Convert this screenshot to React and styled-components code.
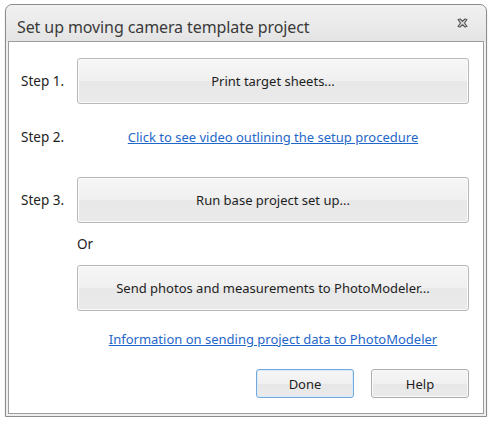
import styled, { createGlobalStyle } from "styled-components";

const Global = createGlobalStyle`
  html, body {
    margin: 0;
    background: #fff;
  }
  body {
    font-family: "Noto Sans", "Open Sans", sans-serif;
    color: #1e1e1e;
  }
`;

const Window = styled.div`
  margin: 4px 0 0 5px;
  width: 482px;
  height: 413px;
  box-sizing: border-box;
  border: 1px solid #8c8c8c;
  border-radius: 7px 7px 0 0;
  background: linear-gradient(180deg, #f1f1f1 0, #e4e4e4 36px, #eeeeee 37px);
  padding: 0 2px 2px 2px;
  display: flex;
  flex-direction: column;
  box-shadow: 0 1px 2px rgba(0, 0, 0, 0.15);
`;

const TitleBar = styled.div`
  height: 36px;
  display: flex;
  align-items: center;
  justify-content: space-between;
  padding: 0 16px 0 9px;
`;

const Title = styled.span`
  font-size: 16px;
  color: #3a3a3a;
  letter-spacing: -0.1px;
  padding-top: 7px;
`;

const Client = styled.div`
  flex: 1;
  background: #fff;
  border: 1px solid #9d9d9d;
  padding: 16px 14px 0 12px;
  display: flex;
  flex-direction: column;
`;

const Row = styled.div`
  display: grid;
  grid-template-columns: 56px 1fr;
  align-items: center;
  margin-top: ${(p) => p.$top || 0}px;
`;

const Label = styled.span`
  font-size: 13.5px;
  color: #1e1e1e;
`;

const BigButton = styled.button`
  height: 46px;
  width: 100%;
  border: 1px solid #b8b8b8;
  border-radius: 3px;
  background: linear-gradient(180deg, #f6f6f6 0%, #f0f0f0 50%, #e8e8e8 51%, #eaeaea 100%);
  box-shadow: inset 0 0 0 1px #fbfbfb;
  font-family: inherit;
  font-size: 13px;
  color: #1e1e1e;
  padding: 0;
`;

const LinkText = styled.a`
  font-size: 13px;
  color: #1f67c9;
  text-decoration: underline;
  text-align: center;
  line-height: 20px;
  cursor: pointer;
`;

const Or = styled.span`
  font-size: 13.5px;
  line-height: 20px;
`;

const Footer = styled.div`
  display: flex;
  justify-content: flex-end;
  gap: 17px;
  margin-top: 20px;
`;

const DialogButton = styled.button`
  width: 98px;
  height: 29px;
  border: 1px solid ${(p) => (p.$default ? "#73a8dc" : "#adadad")};
  border-radius: 3px;
  background: linear-gradient(180deg, #f6f6f6 0%, #f0f0f0 50%, #e7e7e7 51%, #eaeaea 100%);
  box-shadow: inset 0 0 0 1px ${(p) => (p.$default ? "#d7ecfa" : "#fafafa")};
  font-family: inherit;
  font-size: 13px;
  color: #1e1e1e;
  padding: 0;
`;

const CloseIcon = () => (
  <svg width="11" height="10" viewBox="0 0 11 10">
    <path
      d="M1 1.5 L3 1 L5.5 3.3 L8 1 L10 1.5 L7.5 5 L10 8.5 L8 9 L5.5 6.7 L3 9 L1 8.5 L3.5 5 Z"
      fill="#d6d6d6"
      stroke="#5a5a5a"
      strokeWidth="1.2"
      strokeLinejoin="round"
    />
  </svg>
);

export default function App() {
  return (
    <>
      <Global />
      <Window>
        <TitleBar>
          <Title>Set up moving camera template project</Title>
          <CloseIcon />
        </TitleBar>
        <Client>
          <Row>
            <Label>Step 1.</Label>
            <BigButton>Print target sheets...</BigButton>
          </Row>
          <Row $top={23}>
            <Label>Step 2.</Label>
            <LinkText>Click to see video outlining the setup procedure</LinkText>
          </Row>
          <Row $top={30}>
            <Label>Step 3.</Label>
            <BigButton>Run base project set up...</BigButton>
          </Row>
          <Row $top={11}>
            <span />
            <Or>Or</Or>
          </Row>
          <Row $top={11}>
            <span />
            <BigButton>Send photos and measurements to PhotoModeler...</BigButton>
          </Row>
          <Row $top={18}>
            <span />
            <LinkText>Information on sending project data to PhotoModeler</LinkText>
          </Row>
          <Footer>
            <DialogButton $default>Done</DialogButton>
            <DialogButton>Help</DialogButton>
          </Footer>
        </Client>
      </Window>
    </>
  );
}
